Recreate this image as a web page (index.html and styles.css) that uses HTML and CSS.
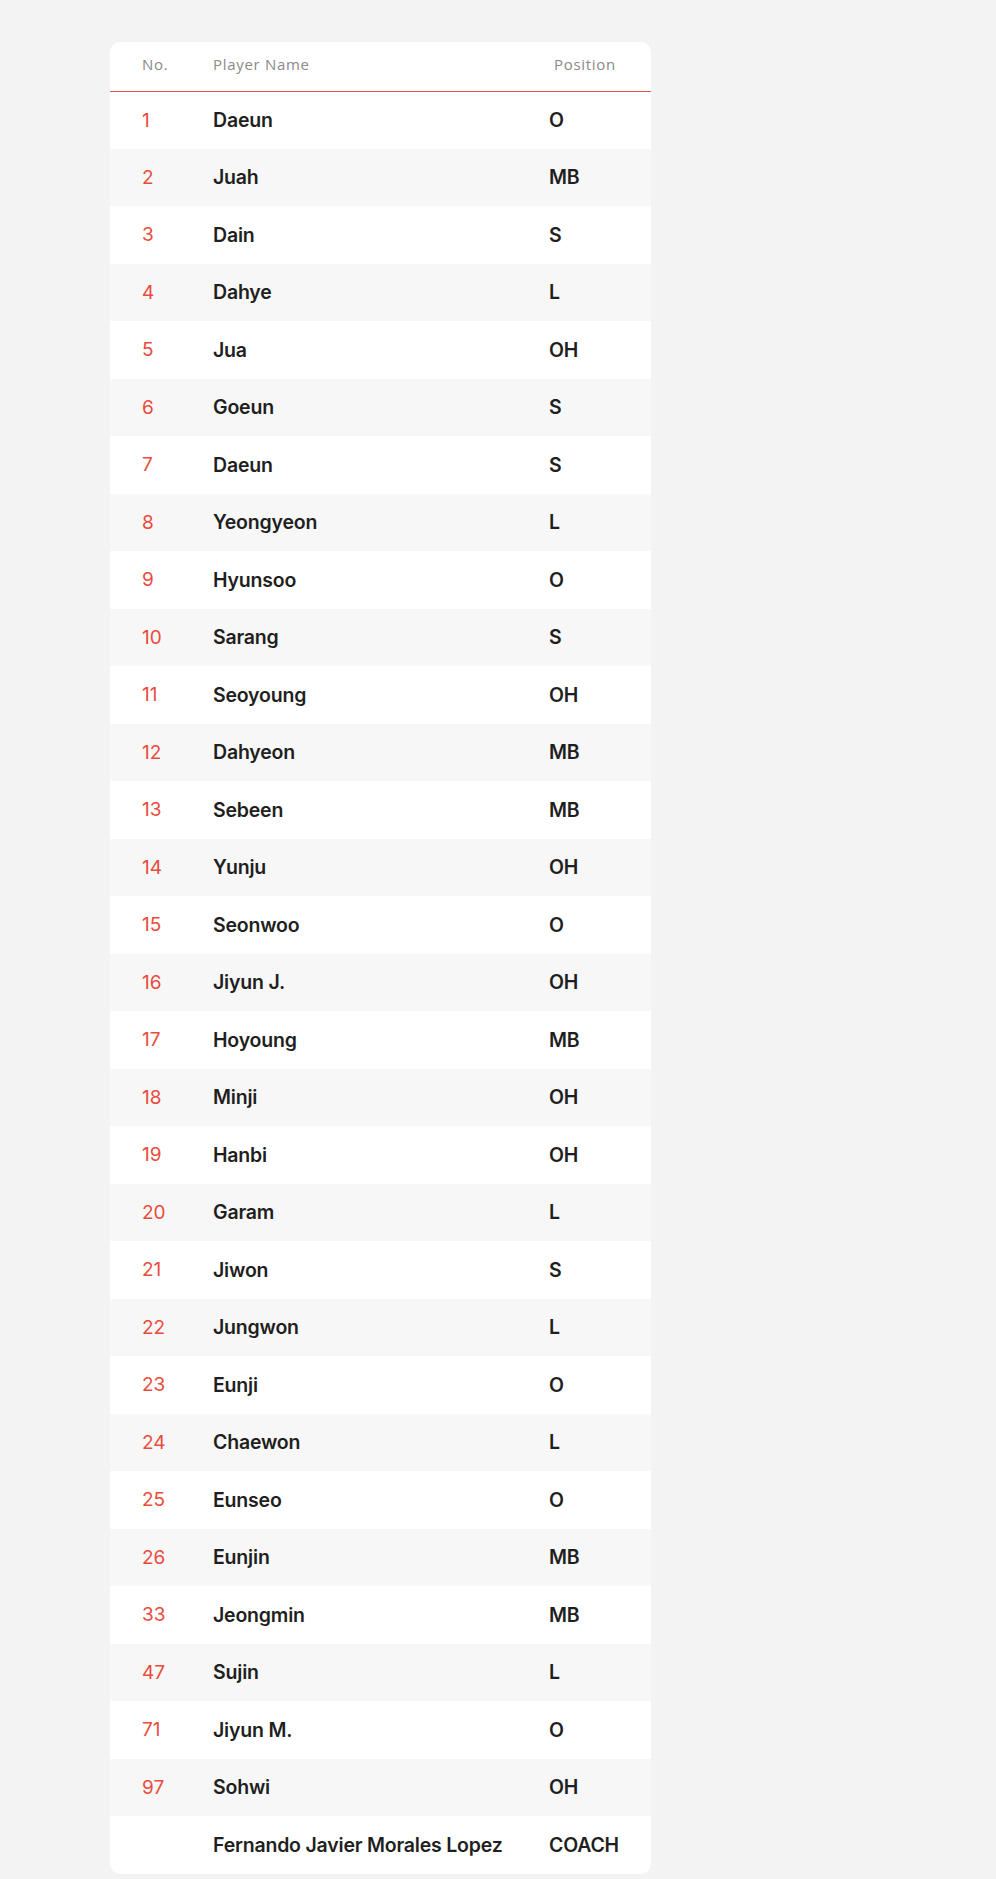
FILE: index.html
```html
<!DOCTYPE html>
<html lang="en">
<head>
<meta charset="utf-8">
<title>Roster</title>
<link rel="stylesheet" href="styles.css">
</head>
<body>
<div class="page">
  <div class="card">
    <table class="roster">
      <thead>
        <tr>
          <th class="col-no">No.</th>
          <th class="col-name">Player Name</th>
          <th class="col-pos">Position</th>
        </tr>
      </thead>
      <tbody>
        <tr><td class="num">1</td><td class="name">Daeun</td><td class="pos">O</td></tr>
        <tr><td class="num">2</td><td class="name">Juah</td><td class="pos">MB</td></tr>
        <tr><td class="num">3</td><td class="name">Dain</td><td class="pos">S</td></tr>
        <tr><td class="num">4</td><td class="name">Dahye</td><td class="pos">L</td></tr>
        <tr><td class="num">5</td><td class="name">Jua</td><td class="pos">OH</td></tr>
        <tr><td class="num">6</td><td class="name">Goeun</td><td class="pos">S</td></tr>
        <tr><td class="num">7</td><td class="name">Daeun</td><td class="pos">S</td></tr>
        <tr><td class="num">8</td><td class="name">Yeongyeon</td><td class="pos">L</td></tr>
        <tr><td class="num">9</td><td class="name">Hyunsoo</td><td class="pos">O</td></tr>
        <tr><td class="num">10</td><td class="name">Sarang</td><td class="pos">S</td></tr>
        <tr><td class="num">11</td><td class="name">Seoyoung</td><td class="pos">OH</td></tr>
        <tr><td class="num">12</td><td class="name">Dahyeon</td><td class="pos">MB</td></tr>
        <tr><td class="num">13</td><td class="name">Sebeen</td><td class="pos">MB</td></tr>
        <tr><td class="num">14</td><td class="name">Yunju</td><td class="pos">OH</td></tr>
        <tr><td class="num">15</td><td class="name">Seonwoo</td><td class="pos">O</td></tr>
        <tr><td class="num">16</td><td class="name">Jiyun J.</td><td class="pos">OH</td></tr>
        <tr><td class="num">17</td><td class="name">Hoyoung</td><td class="pos">MB</td></tr>
        <tr><td class="num">18</td><td class="name">Minji</td><td class="pos">OH</td></tr>
        <tr><td class="num">19</td><td class="name">Hanbi</td><td class="pos">OH</td></tr>
        <tr><td class="num">20</td><td class="name">Garam</td><td class="pos">L</td></tr>
        <tr><td class="num">21</td><td class="name">Jiwon</td><td class="pos">S</td></tr>
        <tr><td class="num">22</td><td class="name">Jungwon</td><td class="pos">L</td></tr>
        <tr><td class="num">23</td><td class="name">Eunji</td><td class="pos">O</td></tr>
        <tr><td class="num">24</td><td class="name">Chaewon</td><td class="pos">L</td></tr>
        <tr><td class="num">25</td><td class="name">Eunseo</td><td class="pos">O</td></tr>
        <tr><td class="num">26</td><td class="name">Eunjin</td><td class="pos">MB</td></tr>
        <tr><td class="num">33</td><td class="name">Jeongmin</td><td class="pos">MB</td></tr>
        <tr><td class="num">47</td><td class="name">Sujin</td><td class="pos">L</td></tr>
        <tr><td class="num">71</td><td class="name">Jiyun M.</td><td class="pos">O</td></tr>
        <tr><td class="num">97</td><td class="name">Sohwi</td><td class="pos">OH</td></tr>
        <tr><td class="num"></td><td class="name">Fernando Javier Morales Lopez</td><td class="pos">COACH</td></tr>
      </tbody>
    </table>
  </div>
</div>
</body>
</html>
```

FILE: styles.css
```css
html, body {
  margin: 0;
  padding: 0;
  background: #f3f3f3;
}

.page {
  padding: 42px 0 4px 110px;
}

.card {
  width: 541px;
  background: #ffffff;
  border-radius: 10px;
  overflow: hidden;
}

.roster {
  width: 100%;
  border-collapse: collapse;
  table-layout: fixed;
  font-family: Inter, "Liberation Sans", sans-serif;
}

.roster th {
  height: 49px;
  padding: 0 0 4px;
  box-sizing: border-box;
  text-align: left;
  font-family: "Open Sans", "Liberation Sans", sans-serif;
  font-weight: 400;
  font-size: 15px;
  letter-spacing: 0.7px;
  color: #8a8a8a;
  border-bottom: 1px solid #e2574c;
  vertical-align: middle;
}

.roster .col-no { width: 103px; padding-left: 32px; }
.roster .col-name { width: 336px; }
.roster .col-pos { padding-left: 5px; }

.roster td {
  height: 57.5px;
  padding: 0;
  vertical-align: middle;
  box-sizing: border-box;
}

.roster tbody tr:nth-child(even) {
  background: #f7f7f7;
}

.roster .num {
  padding-left: 32px;
  color: #ea4b3c;
  font-size: 19px;
  font-weight: 400;
}

.roster .name,
.roster .pos {
  color: #1f1f22;
  font-size: 19.5px;
  font-weight: 600;
  letter-spacing: -0.2px;
}
```
